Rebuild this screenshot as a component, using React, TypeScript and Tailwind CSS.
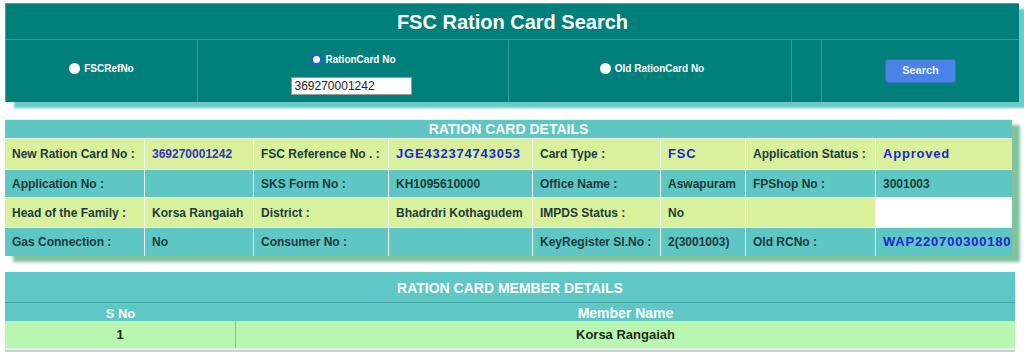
import React from 'react';

type Cell = { text?: string; tone?: 'label' | 'value' | 'blue' | 'blueBold'; bg?: string };

const rows: { bg: string; h: string; cells: Cell[] }[] = [
  {
    bg: 'bg-[#d9f09c]',
    h: 'h-[31px]',
    cells: [
      { text: 'New Ration Card No :', tone: 'label' },
      { text: '369270001242', tone: 'blue' },
      { text: 'FSC Reference No . :', tone: 'label' },
      { text: 'JGE432374743053', tone: 'blueBold' },
      { text: 'Card Type :', tone: 'label' },
      { text: 'FSC', tone: 'blueBold' },
      { text: 'Application Status :', tone: 'label' },
      { text: 'Approved', tone: 'blueBold' },
    ],
  },
  {
    bg: 'bg-[#5ec6c3]',
    h: 'h-[28px]',
    cells: [
      { text: 'Application No :', tone: 'label' },
      {},
      { text: 'SKS Form No :', tone: 'label' },
      { text: 'KH1095610000', tone: 'value' },
      { text: 'Office Name :', tone: 'label' },
      { text: 'Aswapuram', tone: 'value' },
      { text: 'FPShop No :', tone: 'label' },
      { text: '3001003', tone: 'value' },
    ],
  },
  {
    bg: 'bg-[#d9f09c]',
    h: 'h-[30px]',
    cells: [
      { text: 'Head of the Family :', tone: 'label' },
      { text: 'Korsa Rangaiah', tone: 'value' },
      { text: 'District :', tone: 'label' },
      { text: 'Bhadrdri Kothagudem', tone: 'value' },
      { text: 'IMPDS Status :', tone: 'label' },
      { text: 'No', tone: 'value' },
      {},
      { bg: 'bg-white' },
    ],
  },
  {
    bg: 'bg-[#5ec6c3]',
    h: 'h-[29px]',
    cells: [
      { text: 'Gas Connection :', tone: 'label' },
      { text: 'No', tone: 'value' },
      { text: 'Consumer No :', tone: 'label' },
      {},
      { text: 'KeyRegister Sl.No :', tone: 'label' },
      { text: '2(3001003)', tone: 'value' },
      { text: 'Old RCNo :', tone: 'label' },
      { text: 'WAP220700300180', tone: 'blueBold' },
    ],
  },
];

const toneClass: Record<string, string> = {
  label: 'text-[#1d3b3b] font-bold text-[12px]',
  value: 'text-[#1d3b3b] font-bold text-[12px]',
  blue: 'text-[#3434b8] font-bold text-[12px]',
  blueBold: 'text-[#1e28cc] font-bold text-[13px] tracking-[0.8px]',
};

function Radio({ checked }: { checked?: boolean }) {
  return checked ? (
    <span className="inline-block w-[11px] h-[11px] rounded-full bg-white border-[2px] border-[#2a5ad8]" />
  ) : (
    <span className="inline-block w-[11px] h-[11px] rounded-full bg-white" />
  );
}

export default function App() {
  return (
    <div className="w-[1024px] h-[352px] bg-white overflow-hidden font-['Liberation_Sans',Arial,sans-serif] pt-[3px] pl-[5px]">
      {/* search panel */}
      <div className="w-[1014px] bg-[#007f7b] shadow-[9px_6px_2px_#68cdc9] border-l border-t border-[#3aa9a4]">
        <div className="h-[36px] flex items-center justify-center text-white font-bold text-[20px] border-b border-[#2f9c97] pt-[1px]">
          FSC Ration Card Search
        </div>
        <div className="h-[62px] grid grid-cols-[192px_311px_283px_30px_1fr] text-white font-bold text-[10px]">
          <div className="flex items-center justify-center gap-[4px] border-r border-[#2f9c97] pb-[5px]">
            <Radio />
            <span>FSCRefNo</span>
          </div>
          <div className="flex flex-col items-center border-r border-[#2f9c97] pt-[12px]">
            <div className="flex items-center gap-[4px]">
              <Radio checked />
              <span>RationCard No</span>
            </div>
            <div className="mt-[10px] ml-[-4px] w-[121px] h-[18px] bg-white border border-[#9a9a9a] text-[#222] font-normal text-[12px] leading-[16px] px-[3px]">
              369270001242
            </div>
          </div>
          <div className="flex items-center justify-center gap-[4px] border-r border-[#2f9c97] pb-[5px] pl-[4px]">
            <Radio />
            <span>Old RationCard No</span>
          </div>
          <div className="border-r border-[#2f9c97]" />
          <div className="flex items-center justify-center pb-[1px]">
            <div className="w-[71px] h-[24px] rounded-[3px] bg-[#4a82e6] border border-[#3f6fcc] flex items-center justify-center text-[11px] text-[#eef3ff]">
              Search
            </div>
          </div>
        </div>
      </div>

      {/* ration card details */}
      <div className="mt-[17px] w-[1007px] shadow-[8px_6px_3px_#7fc49e] border-t border-[#e0f4f3]">
        <div className="h-[18px] bg-[#5ec6c3] text-white font-bold text-[14px] flex items-center justify-center">
          RATION CARD DETAILS
        </div>
        {rows.map((r, i) => (
          <div
            key={i}
            className={`grid grid-cols-[140px_109px_135px_144px_128px_85px_130px_136px] ${r.h} ${r.bg} border-t border-[#e8f6e8]`}
          >
            {r.cells.map((c, j) => (
              <div
                key={j}
                className={`flex items-center pl-[7px] whitespace-nowrap ${c.bg ?? ''} ${
                  j < 7 ? 'border-r border-[#eef8ee]' : ''
                } ${c.tone ? toneClass[c.tone] : ''}`}
              >
                {c.text}
              </div>
            ))}
          </div>
        ))}
      </div>

      {/* member details */}
      <div className="mt-[16px] w-[1010px] border-b-[2px] border-[#e4ece8] shadow-[0_2px_0_#c9d3cf]">
        <div className="h-[31px] bg-[#5fc7c5] text-white font-bold text-[14px] flex items-center justify-center border-b border-[#3fa8a5] pt-[2px]">
          RATION CARD MEMBER DETAILS
        </div>
        <div className="h-[18px] bg-[#5fc7c5] grid grid-cols-[231px_1fr] text-white font-bold text-[13px]">
          <div className="flex items-center justify-center">S No</div>
          <div className="flex items-center justify-center text-[14px]">Member Name</div>
        </div>
        <div className="h-[27px] bg-[#b9f7b1] grid grid-cols-[231px_1fr] text-[#1a2a1a] font-bold text-[13px]">
          <div className="flex items-center justify-center border-r border-[#8fbf8a]">1</div>
          <div className="flex items-center justify-center">Korsa Rangaiah</div>
        </div>
      </div>
    </div>
  );
}
